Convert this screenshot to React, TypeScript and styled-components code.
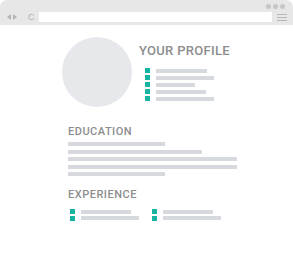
import React from "react";
import styled, { createGlobalStyle } from "styled-components";

const profileLines = [51, 58, 39, 50, 58];
const educationLines = [97, 134, 169, 169, 97];
const experienceCols = [
  [50, 58],
  [50, 58],
];

const App = () => {
  return (
    <>
      <GlobalStyle />
      <Window>
        <TopBar>
          <Dots>
            <Dot />
            <Dot />
            <Dot />
          </Dots>
          <NavRow>
            <NavIcons>
              <svg width="4" height="6" viewBox="0 0 4 6">
                <polygon points="4,0 4,6 0,3" fill="#b4b4b4" />
              </svg>
              <svg width="4" height="6" viewBox="0 0 4 6">
                <polygon points="0,0 0,6 4,3" fill="#b4b4b4" />
              </svg>
              <Reload>C</Reload>
            </NavIcons>
            <Address />
            <Menu>
              <span />
              <span />
              <span />
            </Menu>
          </NavRow>
        </TopBar>

        <Content>
          <ProfileRow>
            <Avatar />
            <ProfileInfo>
              <Title>YOUR PROFILE</Title>
              <List $gap={2} $indent={6}>
                {profileLines.map((w, i) => (
                  <Item key={i}>
                    <Square />
                    <Bar style={{ width: w }} />
                  </Item>
                ))}
              </List>
            </ProfileInfo>
          </ProfileRow>

          <Section $top={18}>
            <Heading>EDUCATION</Heading>
            <Lines>
              {educationLines.map((w, i) => (
                <Bar key={i} style={{ width: w }} />
              ))}
            </Lines>
          </Section>

          <Section $top={12}>
            <Heading>EXPERIENCE</Heading>
            <Columns>
              {experienceCols.map((col, c) => (
                <List key={c} $gap={1.5} $indent={2}>
                  {col.map((w, i) => (
                    <Item key={i}>
                      <Square />
                      <Bar style={{ width: w }} />
                    </Item>
                  ))}
                </List>
              ))}
            </Columns>
          </Section>
        </Content>
      </Window>
    </>
  );
};

const GlobalStyle = createGlobalStyle`
  html, body {
    margin: 0;
    padding: 0;
    background: #ffffff;
    font-family: Roboto, "Liberation Sans", sans-serif;
  }
`;

const Window = styled.div`
  width: 293px;
  height: 273px;
  display: flex;
  flex-direction: column;
  background: #ffffff;
`;

const TopBar = styled.div`
  height: 25px;
  background: #e7e7e7;
  border-radius: 7px 7px 0 0;
  display: flex;
  flex-direction: column;
  box-sizing: border-box;
`;

const Dots = styled.div`
  height: 12px;
  display: flex;
  justify-content: flex-end;
  align-items: center;
  gap: 2px;
  padding-right: 8px;
`;

const Dot = styled.span`
  width: 5px;
  height: 5px;
  border-radius: 50%;
  background: #c6c6c6;
`;

const NavRow = styled.div`
  height: 10px;
  display: flex;
  align-items: center;
  padding: 0 6px 0 7px;
`;

const NavIcons = styled.div`
  width: 32px;
  display: flex;
  align-items: center;
  gap: 2px;
`;

const Reload = styled.span`
  margin-left: 9px;
  font-family: "Liberation Sans", sans-serif;
  font-size: 9px;
  line-height: 9px;
  color: #b4b4b4;
`;

const Address = styled.div`
  width: 234px;
  height: 10px;
  background: #ffffff;
`;

const Menu = styled.div`
  margin-left: 5px;
  width: 10px;
  display: flex;
  flex-direction: column;
  gap: 2px;

  span {
    height: 1px;
    background: #b8b8b8;
  }
`;

const Content = styled.div`
  display: flex;
  flex-direction: column;
  padding: 12px 0 0 62px;
`;

const ProfileRow = styled.div`
  display: flex;
  gap: 7px;
`;

const Avatar = styled.div`
  width: 70px;
  height: 70px;
  border-radius: 50%;
  background: #e6e8eb;
`;

const ProfileInfo = styled.div`
  display: flex;
  flex-direction: column;
  padding-top: 6px;
`;

const Title = styled.div`
  font-size: 13px;
  line-height: 15px;
  font-weight: 500;
  letter-spacing: 0.3px;
  color: #8d8d8d;
  margin-bottom: 10px;
  white-space: nowrap;
`;

const List = styled.div<{ $gap: number; $indent: number }>`
  display: flex;
  flex-direction: column;
  gap: ${(p) => p.$gap}px;
  padding-left: ${(p) => p.$indent}px;
`;

const Item = styled.div`
  display: flex;
  align-items: center;
  gap: 6px;
`;

const Square = styled.span`
  width: 5px;
  height: 5px;
  background: #14b3a2;
`;

const Bar = styled.span`
  display: block;
  height: 4px;
  background: #d6d9de;
`;

const Section = styled.div<{ $top: number }>`
  margin-top: ${(p) => p.$top}px;
  padding-left: 6px;
  display: flex;
  flex-direction: column;
`;

const Heading = styled.div`
  font-size: 11px;
  line-height: 13px;
  font-weight: 500;
  letter-spacing: 0.5px;
  color: #8d8d8d;
  margin-bottom: 4px;
`;

const Lines = styled.div`
  display: flex;
  flex-direction: column;
  gap: 3.5px;
`;

const Columns = styled.div`
  margin-top: 4px;
  display: flex;

  & > div {
    width: 80px;
  }
`;

export default App;
